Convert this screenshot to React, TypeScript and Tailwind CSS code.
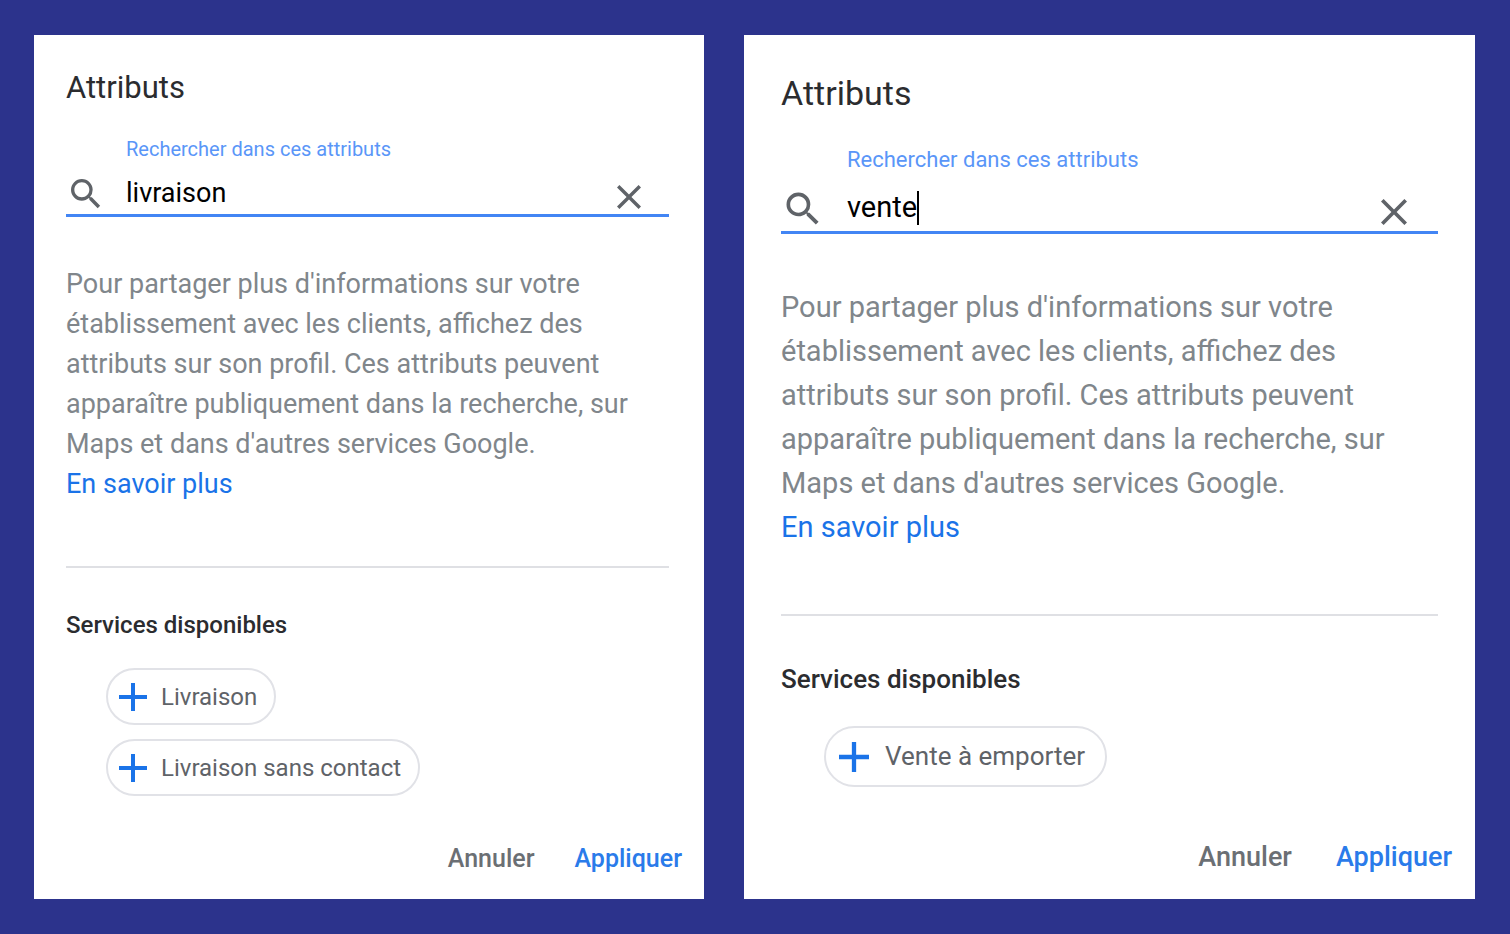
import React, { useState } from 'react';
import { clsx } from 'clsx';

interface AttributesPanelProps {
  id: string;
  initialQuery: string;
  services: string[];
  large?: boolean;
  focused?: boolean;
}

function SearchIcon({ className }: { className?: string }) {
  return (
    <svg viewBox="0 0 24 24" fill="currentColor" className={className} aria-hidden="true">
      <path d="M15.5 14h-.79l-.28-.27A6.471 6.471 0 0 0 16 9.5 6.5 6.5 0 1 0 9.5 16c1.61 0 3.09-.59 4.23-1.57l.27.28v.79l5 4.99L20.49 19l-4.99-5zm-6 0C7.01 14 5 11.99 5 9.5S7.01 5 9.5 5 14 7.01 14 9.5 11.99 14 9.5 14z" />
    </svg>
  );
}

function CloseIcon({ className }: { className?: string }) {
  return (
    <svg viewBox="5 5 14 14" fill="currentColor" className={className} aria-hidden="true">
      <path d="M19 6.41 17.59 5 12 10.59 6.41 5 5 6.41 10.59 12 5 17.59 6.41 19 12 13.41 17.59 19 19 17.59 13.41 12z" />
    </svg>
  );
}

function PlusIcon({ className }: { className?: string }) {
  return (
    <svg viewBox="0 0 28 28" fill="currentColor" className={className} aria-hidden="true">
      <path d="M12 0h4v12h12v4H16v12h-4V16H0v-4h12z" />
    </svg>
  );
}

function AttributesPanel({ id, initialQuery, services, large = false, focused = false }: AttributesPanelProps) {
  const [query, setQuery] = useState(initialQuery);

  return (
    <section
      className={clsx(
        'flex flex-col bg-white',
        large ? 'pt-[38px] pb-[22px] pl-[37px]' : 'pt-[35px] pb-5 pl-8'
      )}
    >
      <div className={large ? 'pr-[37px]' : 'pr-[35px]'}>
        <h2 className={clsx('text-[#2b2c2f]', large ? 'text-[34px] leading-10' : 'text-[31px] leading-9')}>
          Attributs
        </h2>

        {/* Search field */}
        <label
          htmlFor={id}
          className={clsx(
            'block leading-6 text-[#5a96f8]',
            large ? 'mt-[35px] ml-[66px] text-[22px]' : 'mt-[31px] ml-[60px] text-[20px]'
          )}
        >
          Rechercher dans ces attributs
        </label>
        <div
          className={clsx(
            'flex items-end border-b-[3px] border-[#4285f4] text-[#5f6368]',
            large ? 'mt-[13px]' : 'mt-[11px]'
          )}
        >
          <SearchIcon className={large ? 'mr-[22px] size-11' : 'mr-5 size-10'} />
          <div className={clsx('flex flex-1 items-center', large ? 'h-[46px]' : 'h-[42px]')}>
            <input
              id={id}
              type="text"
              value={query}
              onChange={(e) => setQuery(e.target.value)}
              className={clsx(
                'text-black outline-none',
                focused ? 'field-sizing-content caret-transparent' : 'w-full',
                large ? 'text-[29px]' : 'text-[27px]'
              )}
            />
            {focused && <span className="h-[34px] w-[2px] bg-black" />}
          </div>
          <button
            type="button"
            aria-label="Effacer"
            onClick={() => setQuery('')}
            className={clsx('flex items-center justify-center', large ? 'mr-[22px] h-[38px] w-11' : 'mr-5 h-[34px] w-10')}
          >
            <CloseIcon className={large ? 'size-[26px]' : 'size-6'} />
          </button>
        </div>

        <p
          className={clsx(
            'text-[#80868b]',
            large ? 'mt-[51px] text-[29px] leading-[44px]' : 'mt-[47px] text-[27px] leading-10'
          )}
        >
          Pour partager plus d'informations sur votre établissement avec les clients, affichez des attributs
          sur son profil. Ces attributs peuvent apparaître publiquement dans la recherche, sur Maps et dans
          d'autres services Google.
          <br />
          <a href="#" className="text-[#1a73e8]">
            En savoir plus
          </a>
        </p>

        <hr className={clsx('border-t-2 border-[#dfe0e4]', large ? 'mt-[65px]' : 'mt-[62px]')} />

        {/* Services */}
        <h3
          className={clsx(
            'font-medium text-[#2b2c2f]',
            large ? 'mt-[45px] text-[26px] leading-9' : 'mt-[41px] text-[24px] leading-8'
          )}
        >
          Services disponibles
        </h3>
        <div
          className={clsx(
            'flex flex-col items-start gap-[14px]',
            large ? 'mt-[29px] pl-[43px]' : 'mt-[27px] pl-10'
          )}
        >
          {services.map((service) => (
            <button
              key={service}
              type="button"
              className={clsx(
                'flex items-center rounded-full border-2 border-[#e1e2e7] text-[#5f6368]',
                large
                  ? 'h-[61px] gap-4 pr-5 pl-[13px] text-[26px]'
                  : 'h-[57px] gap-[14px] pr-[17px] pl-[11px] text-[24px]'
              )}
            >
              <PlusIcon className={clsx('text-[#1a73e8]', large ? 'size-[30px]' : 'size-7')} />
              {service}
            </button>
          ))}
        </div>
      </div>

      {/* Actions */}
      <div
        className={clsx(
          'mt-auto flex justify-end leading-10 font-medium',
          large ? 'gap-11 pr-[23px] text-[27px]' : 'gap-10 pr-[22px] text-[25px]'
        )}
      >
        <button type="button" className="text-[#6b6f74]">
          Annuler
        </button>
        <button type="button" className="text-[#2a7bea]">
          Appliquer
        </button>
      </div>
    </section>
  );
}

export default function App() {
  return (
    <main className="grid min-h-screen grid-cols-[670fr_731fr] gap-10 bg-[#2c338c] py-[35px] pr-[35px] pl-[34px] font-[Roboto,sans-serif]">
      <AttributesPanel
        id="search-delivery"
        initialQuery="livraison"
        services={['Livraison', 'Livraison sans contact']}
      />
      <AttributesPanel
        id="search-takeaway"
        initialQuery="vente"
        services={['Vente à emporter']}
        large
        focused
      />
    </main>
  );
}
